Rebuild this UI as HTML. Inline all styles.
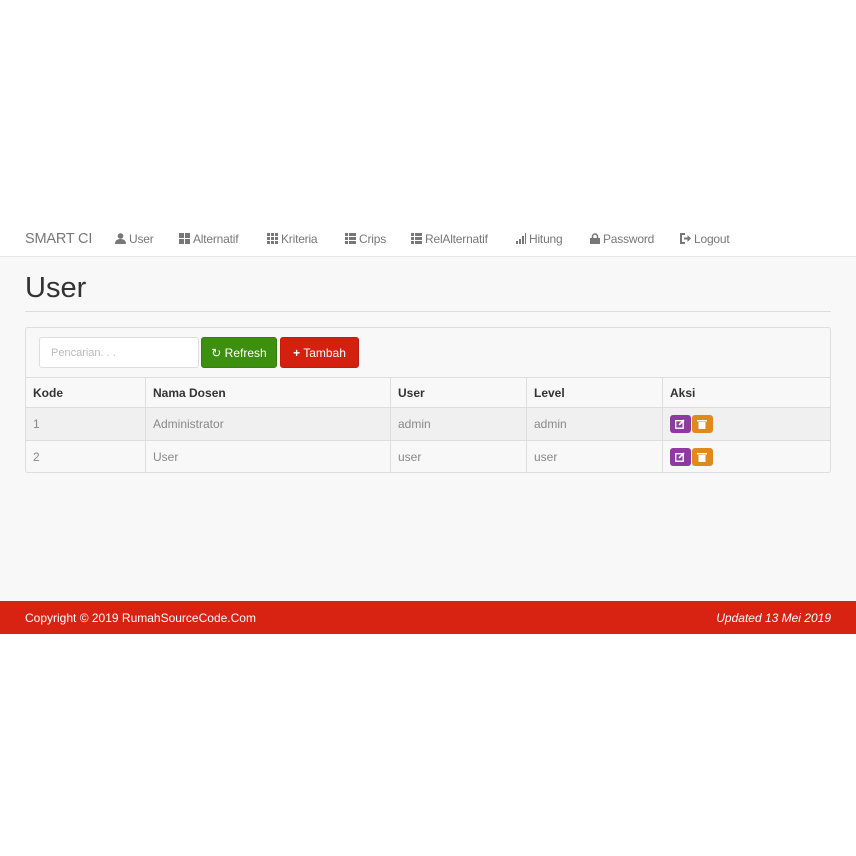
<!DOCTYPE html>
<html><head><style>
*{box-sizing:border-box;margin:0;padding:0}
body{width:856px;height:856px;background:#fff;font-family:"Liberation Sans",sans-serif;font-size:12px;color:#333;position:relative;overflow:hidden}
.nav{position:absolute;top:220px;left:0;width:856px;height:37px;background:#fff;border-bottom:1px solid #e7e7e7}
.nav span{position:absolute;top:12px;color:#777;font-size:12px;white-space:nowrap;letter-spacing:-0.2px}
.nav .brand{font-size:14.5px;top:11px;left:25px}
.ic{display:inline-block;vertical-align:-1px;margin-right:3px}
.main{position:absolute;top:257px;left:0;width:856px;height:344px;background:#f8f8f8}
h1{position:absolute;left:25px;top:15px;font-size:29px;font-weight:normal;color:#333}
.hr{position:absolute;left:25px;top:54px;width:806px;border-top:1px solid #ddd}
.panel{position:absolute;left:25px;top:70px;width:806px;height:146px;border:1px solid #ddd;border-radius:3px;background:#f8f8f8;overflow:hidden}
.inp{position:absolute;left:13px;top:9px;width:160px;height:31px;background:#fff;border:1px solid #ddd;border-radius:3px;color:#bbb;padding:9px 11px;font-size:11px}
.btn{position:absolute;top:9px;height:31px;border-radius:3px;color:#fff;font-size:12px;padding-top:8px;text-align:center}
table{position:absolute;left:-1px;top:49px;width:807px;border-collapse:collapse}
td,th{border:1px solid #ddd;text-align:left;padding:0 7px;font-size:12px;height:33px}
th{height:30px;font-weight:bold;color:#333}
td{color:#888}
tr.odd td{background:#f0f0f0}
.a{display:inline-block;width:21px;height:18px;border-radius:3px;vertical-align:middle;margin-right:1px;position:relative}
.a svg{position:absolute;left:5px;top:4px}
.foot{position:absolute;top:601px;left:0;width:856px;height:33px;background:#d82312;color:#fff;font-size:12px}
</style></head><body>
<div class="nav">
<span class="brand">SMART CI</span>
<span style="left:115px"><svg class="ic" width="11" height="11" viewBox="0 0 11 11"><circle cx="5.5" cy="3" r="2.8" fill="#777"/><path d="M0 11 Q0 6 5.5 6 Q11 6 11 11Z" fill="#777"/></svg>User</span>
<span style="left:179px"><svg class="ic" width="11" height="11"><rect x="0" y="0" width="5" height="5" fill="#777"/><rect x="6" y="0" width="5" height="5" fill="#777"/><rect x="0" y="6" width="5" height="5" fill="#777"/><rect x="6" y="6" width="5" height="5" fill="#777"/></svg>Alternatif</span>
<span style="left:267px"><svg class="ic" width="11" height="11" fill="#777"><rect x="0" y="0" width="3" height="3"/><rect x="4" y="0" width="3" height="3"/><rect x="8" y="0" width="3" height="3"/><rect x="0" y="4" width="3" height="3"/><rect x="4" y="4" width="3" height="3"/><rect x="8" y="4" width="3" height="3"/><rect x="0" y="8" width="3" height="3"/><rect x="4" y="8" width="3" height="3"/><rect x="8" y="8" width="3" height="3"/></svg>Kriteria</span>
<span style="left:345px"><svg class="ic" width="11" height="11" fill="#777"><rect x="0" y="0" width="3" height="3"/><rect x="4" y="0" width="7" height="3"/><rect x="0" y="4" width="3" height="3"/><rect x="4" y="4" width="7" height="3"/><rect x="0" y="8" width="3" height="3"/><rect x="4" y="8" width="7" height="3"/></svg>Crips</span>
<span style="left:411px"><svg class="ic" width="11" height="11" fill="#777"><rect x="0" y="0" width="3" height="3"/><rect x="4" y="0" width="7" height="3"/><rect x="0" y="4" width="3" height="3"/><rect x="4" y="4" width="7" height="3"/><rect x="0" y="8" width="3" height="3"/><rect x="4" y="8" width="7" height="3"/></svg>RelAlternatif</span>
<span style="left:516px"><svg class="ic" width="10" height="11" fill="#777"><rect x="0" y="8" width="2" height="3"/><rect x="3" y="6" width="2" height="5"/><rect x="6" y="3" width="2" height="8"/><rect x="9" y="0" width="1.5" height="11"/></svg>Hitung</span>
<span style="left:590px"><svg class="ic" width="10" height="11"><path d="M2.5 5V3.5a2.5 2.5 0 0 1 5 0V5" stroke="#777" stroke-width="1.5" fill="none"/><rect x="0" y="5" width="10" height="6" fill="#777"/></svg>Password</span>
<span style="left:679px"><svg class="ic" width="12" height="11"><path d="M6 1H2v9h4" stroke="#777" stroke-width="2" fill="none"/><path d="M5 4.5h3.5V2L12 5.5 8.5 9V6.5H5z" fill="#777"/></svg>Logout</span>
</div>
<div class="main">
<h1>User</h1>
<div class="hr"></div>
<div class="panel">
<div class="inp">Pencarian. . .</div>
<div class="btn" style="left:175px;width:76px;background:#3c8f0f;border:1px solid #357f0c">&#x21bb; Refresh</div>
<div class="btn" style="left:254px;width:79px;background:#d3200f;border:1px solid #c01d0d"><b>+</b> Tambah</div>
<table>
<tr><th style="width:120px">Kode</th><th style="width:245px">Nama Dosen</th><th style="width:136px">User</th><th style="width:136px">Level</th><th>Aksi</th></tr>
<tr class="odd"><td>1</td><td>Administrator</td><td>admin</td><td>admin</td><td><span class="a" style="background:#8e3ba0"><svg width="10" height="10"><rect x="0.7" y="1.7" width="7.5" height="7.5" stroke="#fff" stroke-width="1.4" fill="none"/><path d="M4 6l5-5" stroke="#fff" stroke-width="1.6"/></svg></span><span class="a" style="background:#e08a1e"><svg width="10" height="10" fill="#fff"><rect x="0" y="1" width="10" height="1.5"/><rect x="1.5" y="3" width="7" height="7"/></svg></span></td></tr>
<tr><td>2</td><td>User</td><td>user</td><td>user</td><td><span class="a" style="background:#8e3ba0"><svg width="10" height="10"><rect x="0.7" y="1.7" width="7.5" height="7.5" stroke="#fff" stroke-width="1.4" fill="none"/><path d="M4 6l5-5" stroke="#fff" stroke-width="1.6"/></svg></span><span class="a" style="background:#e08a1e"><svg width="10" height="10" fill="#fff"><rect x="0" y="1" width="10" height="1.5"/><rect x="1.5" y="3" width="7" height="7"/></svg></span></td></tr>
</table>
</div>
</div>
<div class="foot"><span style="position:absolute;left:25px;top:10px">Copyright © 2019 RumahSourceCode.Com</span><span style="position:absolute;right:25px;top:10px;font-style:italic">Updated 13 Mei 2019</span></div>
</body></html>
